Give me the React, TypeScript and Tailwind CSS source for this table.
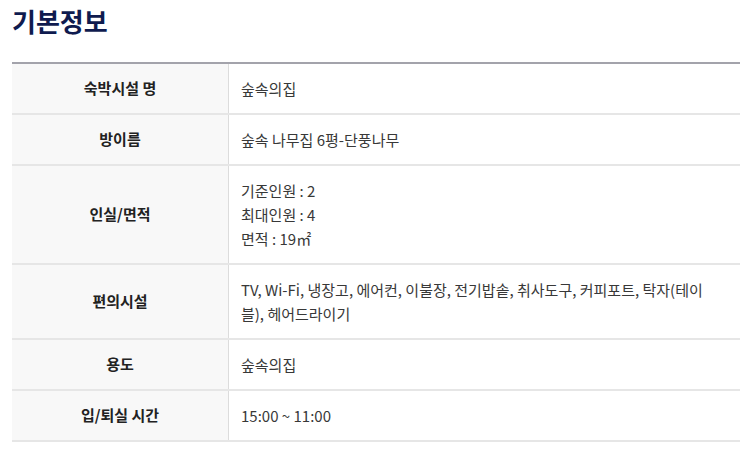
const rows: { label: string; lines: string[] }[] = [
  { label: "숙박시설 명", lines: ["숲속의집"] },
  { label: "방이름", lines: ["숲속 나무집 6평-단풍나무"] },
  { label: "인실/면적", lines: ["기준인원 : 2", "최대인원 : 4", "면적 : 19㎡"] },
  {
    label: "편의시설",
    lines: ["TV, Wi-Fi, 냉장고, 에어컨, 이불장, 전기밥솥, 취사도구, 커피포트, 탁자(테이블), 헤어드라이기"],
  },
  { label: "용도", lines: ["숲속의집"] },
  { label: "입/퇴실 시간", lines: ["15:00 ~ 11:00"] },
];

export default function App() {
  return (
    <div
      className="w-[751px] h-[452px] bg-white overflow-hidden"
      style={{ fontFamily: '"Noto Sans CJK KR", "Noto Sans", sans-serif' }}
    >
      {/* Section title */}
      <h2 className="pl-[12px] pt-[2px] text-[26px] leading-[38px] font-bold text-[#0f1b4f]">기본정보</h2>

      {/* Info table */}
      <div className="mt-[22px] ml-[12px] w-[728px] border-t-2 border-[#a3a3ab]">
        {rows.map((row) => (
          <div key={row.label} className="flex border-b-2 border-[#e6e6e6]">
            <div className="w-[217px] shrink-0 bg-[#f8f8f8] border-r border-[#dcdcdc] flex items-center justify-center text-[15px] font-bold text-[#222]">
              {row.label}
            </div>
            <div className="flex-1 py-[12.5px] pl-3 pr-4 text-[15px] leading-[24px] text-[#383838]">
              {row.lines.map((line) => (
                <p key={line}>{line}</p>
              ))}
            </div>
          </div>
        ))}
      </div>
    </div>
  );
}
